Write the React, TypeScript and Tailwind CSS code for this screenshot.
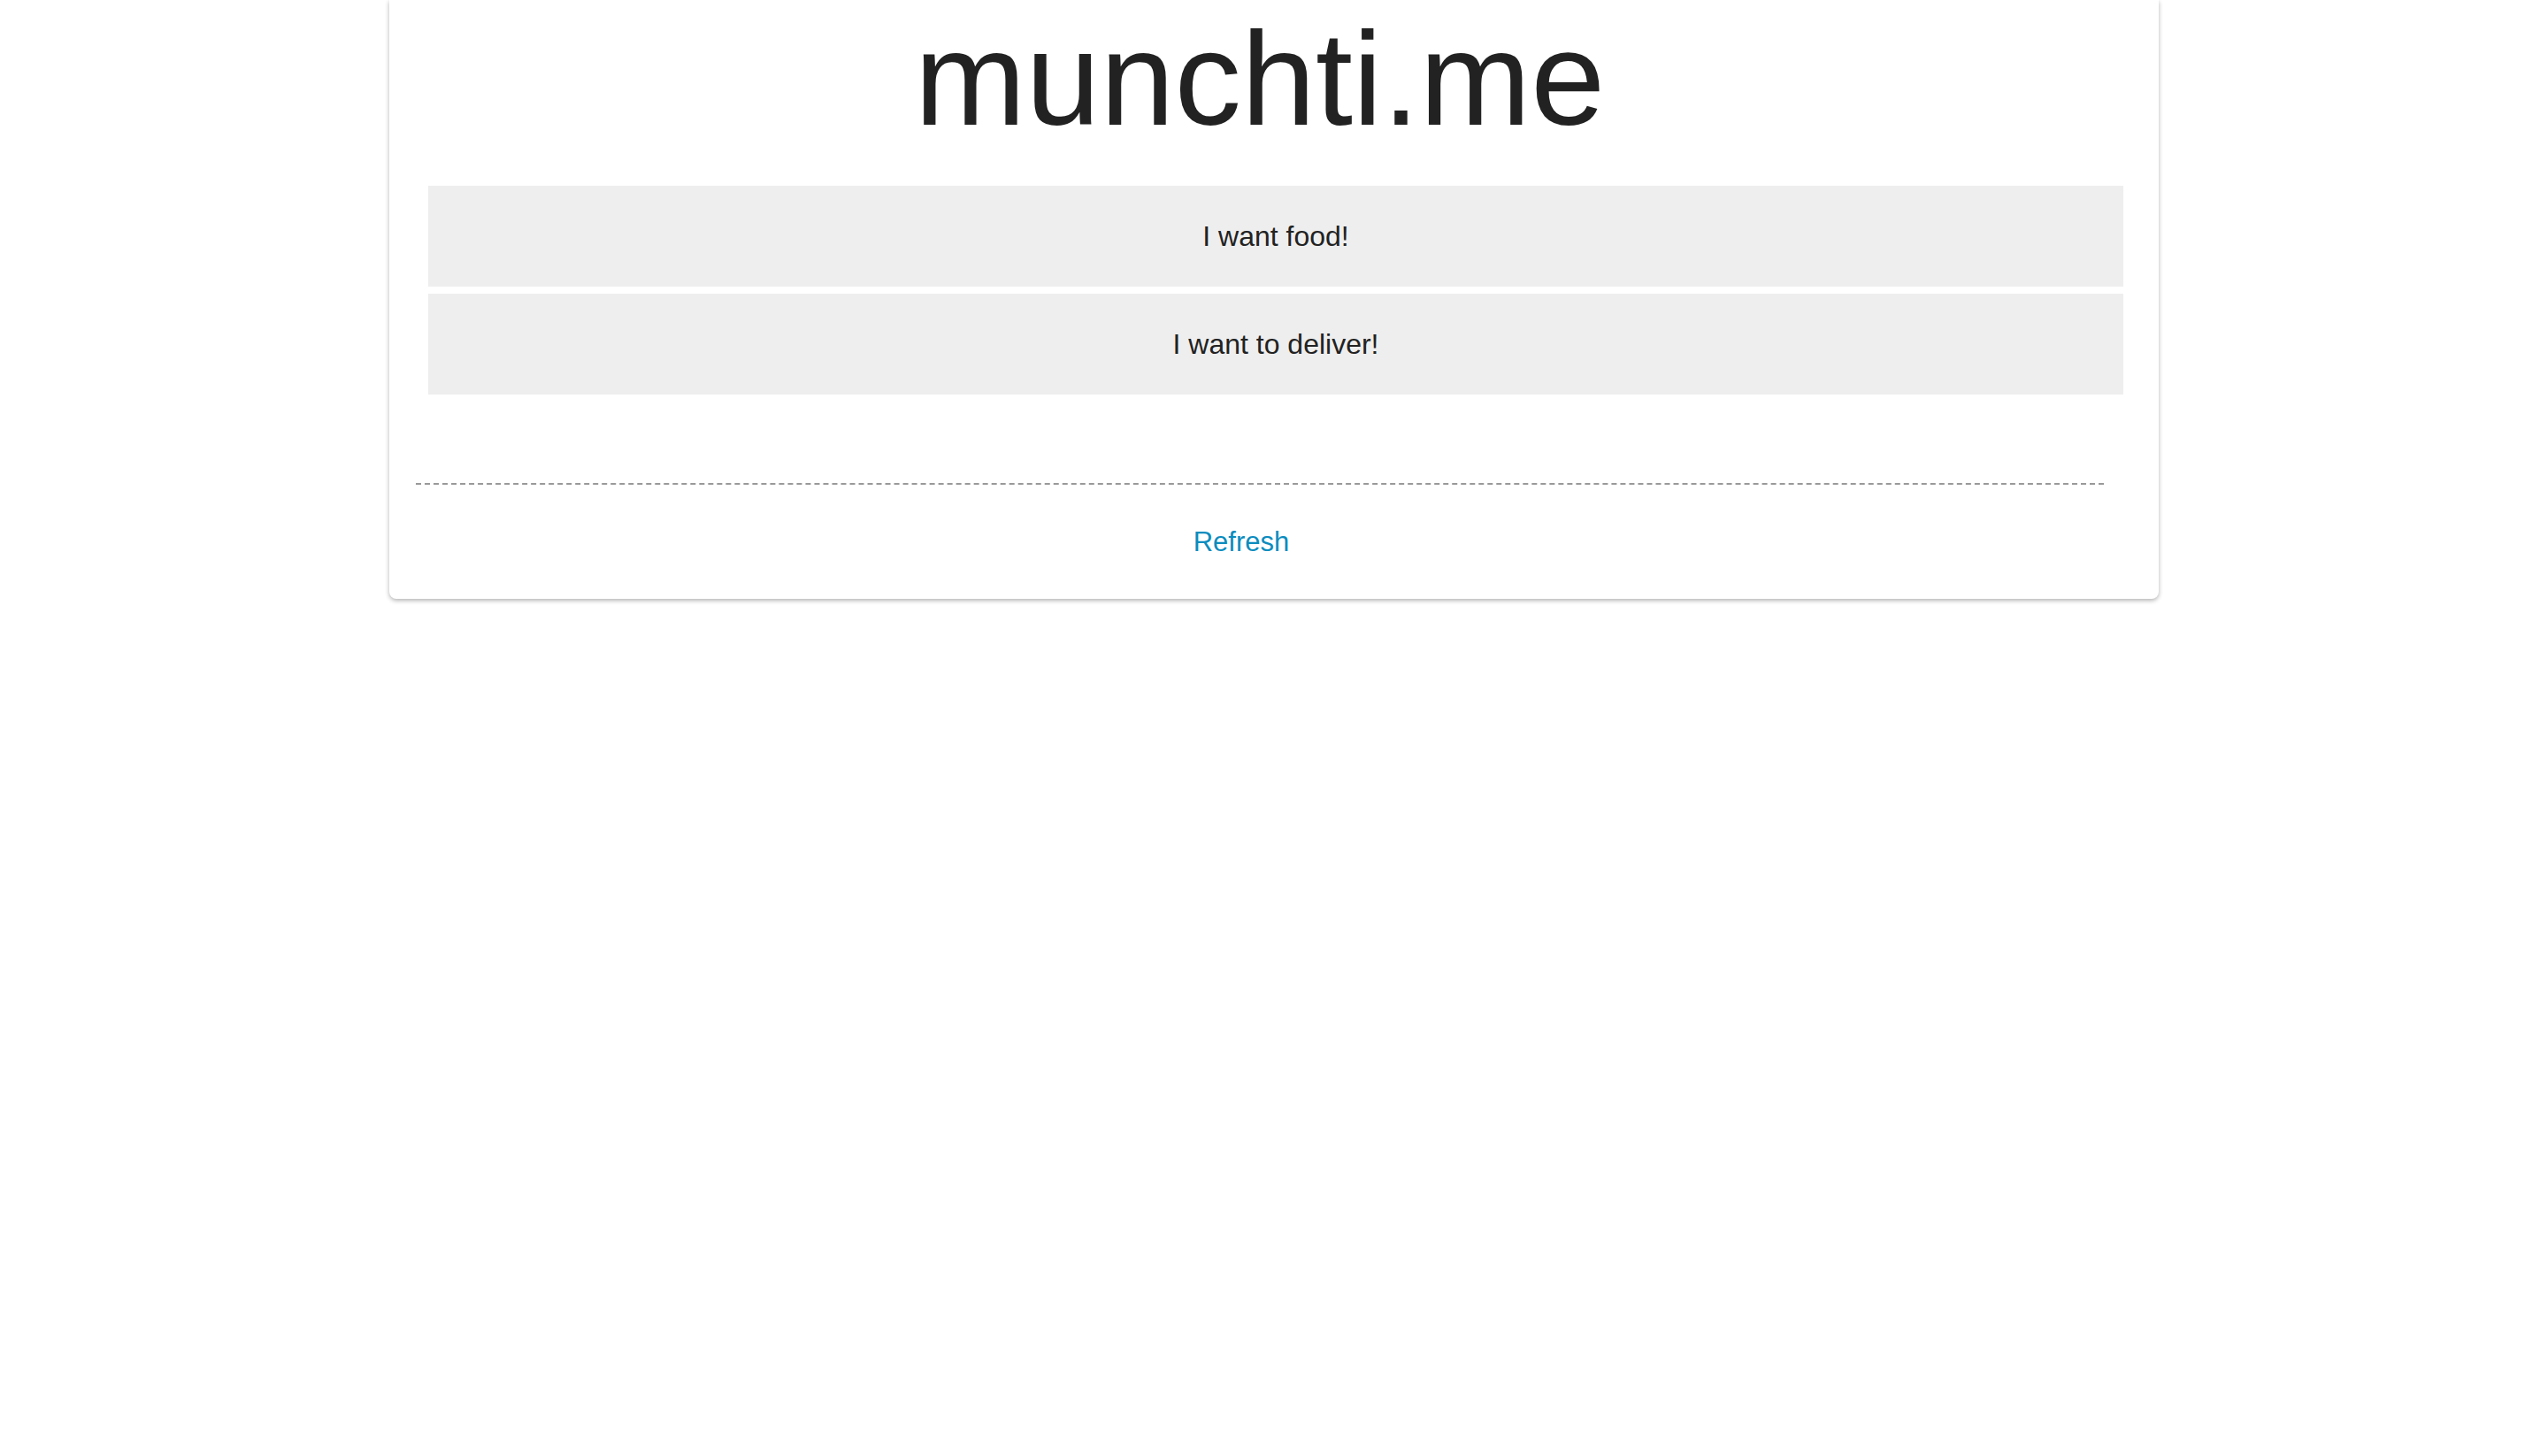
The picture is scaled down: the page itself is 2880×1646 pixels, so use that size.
const OPTIONS = ['I want food!', 'I want to deliver!']

export default function App() {
  return (
    <div className="min-h-screen bg-white" style={{ fontFamily: '"Liberation Sans", Arial, Helvetica, sans-serif' }}>
      <div className="w-[2000px] mx-auto bg-white rounded-b-[8px] shadow-[0_2px_5px_rgba(0,0,0,0.3)] pb-[49px]">
        {/* Title */}
        <h1 className="ml-[30px] mr-[62px] pt-[13px] text-center text-[151px] leading-none text-[#222] font-normal">
          munchti.me
        </h1>

        {/* Choices */}
        <div className="ml-[44px] mr-[40px] mt-[46px] flex flex-col gap-[8px]">
          {OPTIONS.map(o => (
            <button
              key={o}
              className="h-[114px] w-full bg-[#eeeeee] text-[32px] text-[#222] flex items-center justify-center"
            >
              {o}
            </button>
          ))}
        </div>

        <div className="ml-[30px] mr-[62px] mt-[100px] border-t-2 border-dashed border-[#999]" />

        <div className="ml-[30px] mr-[62px] pr-[42px] mt-[49px] flex justify-center">
          <a href="#" className="text-[31px] leading-[31px] text-[#0a8cbe]">Refresh</a>
        </div>
      </div>
    </div>
  )
}
